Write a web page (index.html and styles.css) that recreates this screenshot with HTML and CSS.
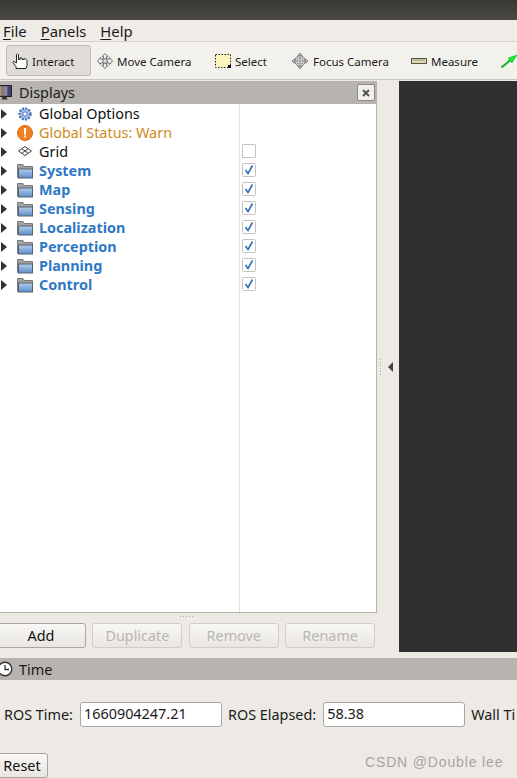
FILE: index.html
```html
<!DOCTYPE html>
<html lang="en">
<head>
<meta charset="utf-8">
<title>RViz</title>
<link rel="stylesheet" href="styles.css">
</head>
<body>
<svg class="defs" width="0" height="0" aria-hidden="true">
  <defs>
    <linearGradient id="fold" x1="0" y1="0" x2="0" y2="1"><stop offset="0" stop-color="#b4cdea"/><stop offset="1" stop-color="#5b8fca"/></linearGradient>
    <symbol id="folder" viewBox="0 0 16 16">
      <path d="M0.5 14.5 L0.5 1.5 L6 1.5 L7.5 3.5 L15.5 3.5 L15.5 14.5 Z" fill="#a2a2a0" stroke="#77797a"/>
      <rect x="1.5" y="6" width="14" height="9" fill="url(#fold)" stroke="#566270"/>
    </symbol>
    <symbol id="tri" viewBox="0 0 6 10"><path d="M0 0 L6 5 L0 10 Z" fill="#333"/></symbol>
    <symbol id="tick" viewBox="0 0 14 14"><rect x="0.5" y="0.5" width="13" height="13" rx="1" fill="#fff" stroke="#c6c3be"/><path d="M3.5 7 L6 10.5 L10.5 2.5" fill="none" stroke="#2f6fb5" stroke-width="1.6"/></symbol>
  </defs>
</svg>

<div class="titlebar"></div>

<nav class="menubar">
  <span class="menu"><u>F</u>ile</span>
  <span class="menu"><u>P</u>anels</span>
  <span class="menu"><u>H</u>elp</span>
</nav>

<div class="toolbar">
  <div class="tool tool-active">
    <svg class="ticon" viewBox="0 0 16 16"><path d="M4 15.5 V13.5 L0.8 9.5 L1.8 8.3 L4.5 10 V1.8 L5.5 0.8 L6.5 1.8 V6.5 H8 V5 H10 V6.5 H11.8 V5.8 H13.4 L15 7.5 V12.5 L14 15.5 Z" fill="#fff" stroke="#222" stroke-width="1"/></svg>
    <span class="tool-text">Interact</span>
  </div>
  <div class="tool tool-move">
    <svg class="ticon" viewBox="0 0 16 16"><g fill="#f1f0ee" stroke="#6f6f6f"><path d="M8 0.5 L5 3.5 H6.5 V6 H3.5 V4.5 L0.5 8 L3.5 11.5 V10 H6.5 V12.5 H5 L8 15.5 L11 12.5 H9.5 V10 H12.5 V11.5 L15.5 8 L12.5 4.5 V6 H9.5 V3.5 H11 Z"/><circle cx="8" cy="8" r="2.4" fill="#d8d8d8"/></g></svg>
    <span class="tool-text">Move Camera</span>
  </div>
  <div class="tool tool-select">
    <svg class="ticon" viewBox="0 0 16 16"><rect x="0.5" y="1.5" width="15" height="13" fill="#fbf5bd" stroke="#222" stroke-dasharray="1.5 1.5"/><rect x="13" y="12" width="3" height="3" fill="#111"/></svg>
    <span class="tool-text">Select</span>
  </div>
  <div class="tool tool-focus">
    <svg class="ticon" viewBox="0 0 16 16"><g fill="#e8e8e8" stroke="#7a7a7a"><path d="M8 0 L10 2.6 H6 Z M8 16 L10 13.4 H6 Z M0 8 L2.6 6 V10 Z M16 8 L13.4 6 V10 Z"/><circle cx="8" cy="8" r="5.2"/><path d="M3 8 H13 M8 3 V13 M5.2 5 V11 M10.8 5 V11 M5 5.2 H11 M5 10.8 H11" stroke-width="0.7"/></g></svg>
    <span class="tool-text">Focus Camera</span>
  </div>
  <div class="tool tool-measure">
    <svg class="ticon" viewBox="0 0 16 16"><rect x="0.5" y="5.5" width="15" height="5" fill="#e2d8a8" stroke="#555"/><path d="M3 6 V8 M5 6 V8 M7 6 V8 M9 6 V8 M11 6 V8 M13 6 V8" stroke="#777" stroke-width="0.7"/></svg>
    <span class="tool-text">Measure</span>
  </div>
  <div class="tool tool-arrow">
    <svg class="ticon" viewBox="0 0 16 16"><path d="M0.5 14.5 L12 5" stroke="#12b62c" stroke-width="2"/><path d="M16 2 L7 5 L11 10 Z" fill="#18e838" stroke="#18a82e" stroke-width="0.5"/></svg>
  </div>
</div>

<main class="workspace">
  <section class="displays">
    <header class="panel-head">
      <svg class="head-icon" viewBox="0 0 16 16"><rect x="0.5" y="0.5" width="14" height="11" fill="#5a5a68" stroke="#222"/><rect x="1.5" y="1.5" width="3" height="9" fill="#7fae7a"/><rect x="4.5" y="1.5" width="3" height="9" fill="#b06a6a"/><rect x="7.5" y="1.5" width="3" height="9" fill="#8a8ab8"/><rect x="10.5" y="1.5" width="3.5" height="9" fill="#3f3f70"/><path d="M5.5 12 H9.5 L10.5 14.5 H4.5 Z" fill="#333"/></svg>
      <span class="head-title">Displays</span>
      <span class="close-btn"><svg class="close-x" viewBox="0 0 8 8"><path d="M1 1 L7 7 M7 1 L1 7" stroke="#555" stroke-width="2"/></svg></span>
    </header>
    <div class="tree">
      <div class="rows">
        <div class="row"><svg class="tri"><use href="#tri"/></svg>
          <svg class="ricon" viewBox="0 0 16 16"><circle cx="8" cy="8" r="5.5" fill="#a9c0e6" stroke="#4b76b8" stroke-width="2.4" stroke-dasharray="2 1.2"/><circle cx="8" cy="8" r="2.2" fill="#fff" stroke="#4b76b8"/></svg>
          <span>Global Options</span><span class="cell"></span></div>
        <div class="row warn"><svg class="tri"><use href="#tri"/></svg>
          <svg class="ricon" viewBox="0 0 16 16"><circle cx="8" cy="8" r="7.5" fill="#f08020" stroke="#d9680f"/><rect x="7" y="3" width="2" height="6.5" fill="#fff"/><rect x="7" y="10.5" width="2" height="2" fill="#fff"/></svg>
          <span>Global Status: Warn</span><span class="cell"></span></div>
        <div class="row"><svg class="tri"><use href="#tri"/></svg>
          <svg class="ricon" viewBox="0 0 16 16"><g fill="none" stroke="#444"><path d="M8 2.5 L14.5 7 L8 11.5 L1.5 7 Z"/><path d="M4.8 4.8 L11.2 9.2 M11.2 4.8 L4.8 9.2"/></g></svg>
          <span>Grid</span><span class="cell"><span class="box"></span></span></div>
        <div class="row group"><svg class="tri"><use href="#tri"/></svg><svg class="ricon"><use href="#folder"/></svg><span>System</span><span class="cell"><svg class="check"><use href="#tick"/></svg></span></div>
        <div class="row group"><svg class="tri"><use href="#tri"/></svg><svg class="ricon"><use href="#folder"/></svg><span>Map</span><span class="cell"><svg class="check"><use href="#tick"/></svg></span></div>
        <div class="row group"><svg class="tri"><use href="#tri"/></svg><svg class="ricon"><use href="#folder"/></svg><span>Sensing</span><span class="cell"><svg class="check"><use href="#tick"/></svg></span></div>
        <div class="row group"><svg class="tri"><use href="#tri"/></svg><svg class="ricon"><use href="#folder"/></svg><span>Localization</span><span class="cell"><svg class="check"><use href="#tick"/></svg></span></div>
        <div class="row group"><svg class="tri"><use href="#tri"/></svg><svg class="ricon"><use href="#folder"/></svg><span>Perception</span><span class="cell"><svg class="check"><use href="#tick"/></svg></span></div>
        <div class="row group"><svg class="tri"><use href="#tri"/></svg><svg class="ricon"><use href="#folder"/></svg><span>Planning</span><span class="cell"><svg class="check"><use href="#tick"/></svg></span></div>
        <div class="row group"><svg class="tri"><use href="#tri"/></svg><svg class="ricon"><use href="#folder"/></svg><span>Control</span><span class="cell"><svg class="check"><use href="#tick"/></svg></span></div>
      </div>
    </div>
    <div class="grip"></div>
    <div class="actions">
      <button class="btn">Add</button>
      <button class="btn" disabled>Duplicate</button>
      <button class="btn" disabled>Remove</button>
      <button class="btn" disabled>Rename</button>
    </div>
  </section>
  <div class="splitter">
    <span class="split-dots"></span>
    <span class="split-arrow"></span>
  </div>
  <div class="viewport"></div>
</main>

<section class="time">
  <header class="panel-head time-head">
    <svg class="head-icon" viewBox="0 0 16 16"><circle cx="8" cy="8" r="6.8" fill="#fff" stroke="#333" stroke-width="1.4"/><path d="M8 4 V8.5 H12" fill="none" stroke="#333" stroke-width="1.3"/></svg>
    <span class="head-title">Time</span>
  </header>
  <div class="time-row">
    <label class="time-label">ROS Time:</label>
    <span class="field">1660904247.21</span>
    <label class="time-label">ROS Elapsed:</label>
    <span class="field">58.38</span>
    <label class="time-label">Wall Ti</label>
  </div>
  <button class="btn btn-reset">Reset</button>
</section>

<div class="watermark">CSDN @Double lee</div>
</body>
</html>
```
FILE: styles.css
```css
* { box-sizing: border-box; }
html, body { margin: 0; padding: 0; }
body {
  width: 517px;
  height: 778px;
  overflow: hidden;
  position: relative;
  background: #edeae5;
  color: #1a1a1a;
  font-family: "Noto Sans", "Open Sans", sans-serif;
  font-size: 14.4px;
}
.defs { position: absolute; }

.titlebar {
  height: 20px;
  background: linear-gradient(#383733, #4c4a45);
}

.menubar {
  height: 21px;
  display: flex;
  align-items: center;
  gap: 14px;
  padding-left: 3px;
  font-size: 14.8px;
  background: #efece7;
}
.menu u { text-underline-offset: 2px; }

.toolbar {
  height: 39px;
  display: flex;
  align-items: center;
  overflow: hidden;
  border-top: 1px solid #d3d0cb;
  border-bottom: 1px solid #c9c6c1;
  background: #f3f1ec;
  padding-left: 6px;
  font-size: 11.5px;
  white-space: nowrap;
}
.tool {
  display: flex;
  align-items: center;
  gap: 4px;
  height: 31px;
  flex: none;
}
.tool-text { padding-top: 2px; }
.ticon { width: 16px; height: 16px; flex: none; }
.tool-active {
  width: 85px;
  padding-left: 5px;
  border: 1px solid #bcb9b4;
  border-radius: 3px;
  background: #e0ddd8;
}
.tool-move { margin-left: 6px; width: 118px; }
.tool-select { width: 77px; }
.tool-focus { width: 119px; gap: 5px; }
.tool-measure { width: 90px; }

.workspace {
  display: flex;
  height: 571px;
  margin-top: 1px;
}
.displays {
  width: 377px;
  display: flex;
  flex-direction: column;
  flex: none;
}
.panel-head {
  height: 23px;
  display: flex;
  align-items: center;
  background: #b7b3af;
  flex: none;
}
.head-icon { width: 16px; height: 16px; margin-left: -3px; flex: none; }
.head-title { margin-left: 6px; }
.close-btn {
  margin-left: auto;
  margin-right: 2px;
  width: 18px;
  height: 17px;
  display: flex;
  align-items: center;
  justify-content: center;
  border: 1px solid #8f8c88;
  border-radius: 2px;
  background: #f2f0ec;
}
.close-x { width: 8px; height: 8px; }

.tree {
  height: 509px;
  flex: none;
  background: #fff;
  border-right: 1px solid #b5b2ad;
  border-bottom: 1px solid #b5b2ad;
}
.rows {
  height: 100%;
  background: linear-gradient(#e4e2de, #e4e2de) 239px 0 / 1px 100% no-repeat;
}
.row {
  height: 19px;
  display: flex;
  align-items: center;
  color: #111;
  padding-left: 1px;
}
.tri { width: 6px; height: 10px; flex: none; }
.ricon { width: 16px; height: 16px; margin-left: 10px; margin-right: 6px; flex: none; }
.warn { color: #d08a1c; }
.group { color: #2f78c5; font-weight: 700; }
.cell {
  margin-left: auto;
  width: 137px;
  display: flex;
  align-items: center;
  padding: 0 0 2px 3px;
}
.box {
  width: 14px;
  height: 14px;
  display: block;
  border: 1px solid #c6c3be;
  border-radius: 1px;
  background: #fff;
}
.check { width: 14px; height: 14px; }

.grip {
  height: 10px;
  flex: none;
  padding: 1px 183px 0 178px;
  background: radial-gradient(circle, #aaa 0.6px, transparent 0.9px) 178px 1px / 3px 3px repeat-x content-box;
}
.actions {
  display: flex;
  gap: 6.4px;
  margin-left: -4px;
  height: 25px;
  flex: none;
}
.btn {
  width: 90px;
  height: 25px;
  padding: 0;
  font: inherit;
  color: #111;
  border: 1px solid #a9a6a1;
  border-radius: 3px;
  background: linear-gradient(#f8f7f5, #e9e6e1);
}
.btn:disabled { color: #b9b6b1; border-color: #d0cdc8; }

.splitter {
  width: 22px;
  flex: none;
  display: flex;
  align-items: center;
  gap: 7px;
  padding-left: 3px;
}
.split-dots {
  width: 1px;
  height: 16px;
  background: repeating-linear-gradient(#aaa 0 1px, transparent 1px 3px);
}
.split-arrow {
  width: 0;
  height: 0;
  border-top: 5.5px solid transparent;
  border-bottom: 5.5px solid transparent;
  border-right: 5px solid #444;
}
.viewport { flex: 1; background: #303030; }

.time { margin-top: 6px; }
.time-head { height: 22px; }
.time-row {
  display: flex;
  align-items: center;
  height: 25px;
  margin-top: 22px;
  padding-left: 4px;
  white-space: nowrap;
  overflow: hidden;
}
.time-label { flex: none; }
.field {
  width: 142px;
  height: 25px;
  flex: none;
  margin: 0 6px 0 7px;
  padding-left: 3px;
  line-height: 22px;
  background: #fff;
  border: 1px solid #aaa7a2;
  border-radius: 3px;
}
.btn-reset {
  display: block;
  width: 52px;
  margin: 26px 0 0 -4px;
}

.watermark {
  position: absolute;
  left: 365px;
  top: 754px;
  font-family: "Liberation Sans", sans-serif;
  font-size: 14px;
  letter-spacing: 0.85px;
  color: #a6a4a1;
}
```
